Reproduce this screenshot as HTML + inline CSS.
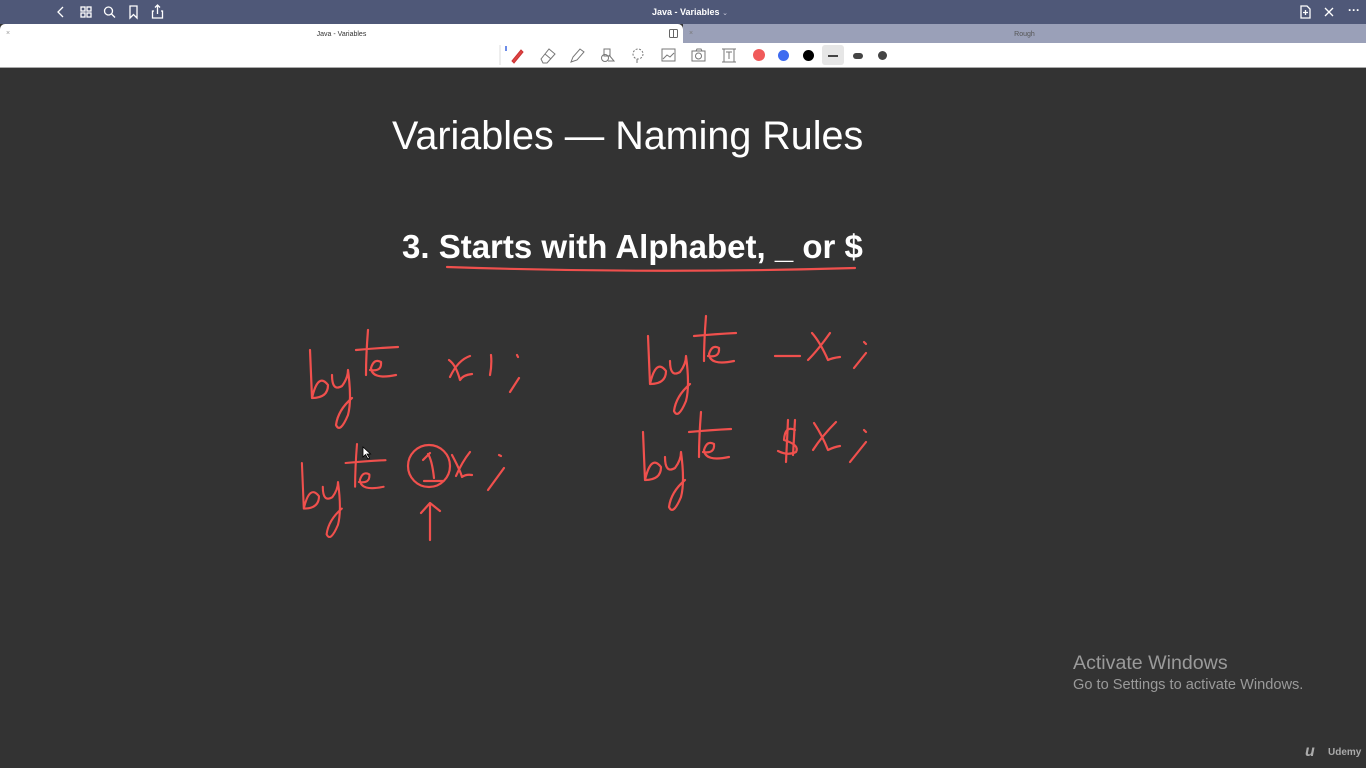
<!DOCTYPE html>
<html><head><meta charset="utf-8"><style>
*{margin:0;padding:0;box-sizing:border-box}
body{width:1366px;height:768px;overflow:hidden;background:#333333;font-family:"Liberation Sans",sans-serif;position:relative}
.top{position:absolute;left:0;top:0;width:1366px;height:24px;background:#4f5878;color:#fff}
.tabs{position:absolute;top:24px;left:0;width:1366px;height:19px}
.tab1{position:absolute;left:0;top:0;width:683px;height:19px;background:#fff;border-radius:5px 5px 0 0;font-size:7px;color:#333;text-align:center;line-height:19px}
.tab2{position:absolute;left:683px;top:0;width:683px;height:19px;background:#9aa0b8;font-size:7px;color:#555;text-align:center;line-height:19px}
.tool{position:absolute;top:43px;left:0;width:1366px;height:25px;background:#fff;border-bottom:1px solid #aaa}
.w{position:absolute;white-space:nowrap}
</style></head><body>
<div class="top">
<svg width="1366" height="24" style="position:absolute;left:0;top:0" fill="none" stroke="#fff" stroke-width="1.3">
<path d="M63 7 L58 12 L63 17"/>
<rect x="81" y="7" width="4" height="4"/><rect x="87" y="7" width="4" height="4"/><rect x="81" y="13" width="4" height="4"/><rect x="87" y="13" width="4" height="4"/>
<circle cx="108.5" cy="11" r="4"/><path d="M111.5 14 L115 17.5"/>
<path d="M130 6 H137 V18 L133.5 14.5 L130 18 Z"/>
<path d="M154 11 H152.5 V18 H162.5 V11 H161 M157.5 14 V5 M155 7.5 L157.5 5 L160 7.5"/>
<path d="M1301 6 H1307 L1310 9 V18 H1301 Z M1305.5 10 V15 M1303 12.5 H1308"/>
<path d="M1325 8 L1333 16 M1333 8 L1325 16"/>
</svg>
<div class="w" style="left:652px;top:7px;font-size:9px;font-weight:bold">Java - Variables <span style="font-weight:normal;font-size:7px;color:#ccd">⌄</span></div>
<div class="w" style="left:1348px;top:3px;font-size:12px;font-weight:bold">···</div>
</div>
<div class="tabs">
<div class="tab1"><span style="position:absolute;left:6px;color:#999">×</span><span style="position:relative;top:1px">Java - Variables</span><svg style="position:absolute;left:669px;top:5px" width="10" height="9" fill="none" stroke="#666"><rect x="0.5" y="0.5" width="8" height="8" rx="1"/><path d="M4.5 0.5 V8.5"/></svg></div>
<div class="tab2"><span style="position:absolute;left:6px;color:#777">×</span><span style="position:relative;top:1px">Rough</span></div>
</div>
<div class="tool">
<svg width="1366" height="25" style="position:absolute;left:0;top:0" fill="none" stroke="#777" stroke-width="1">
<path d="M500 2 V22" stroke="#ddd"/>
<path d="M506 3 V8" stroke="#3a66e0" stroke-width="1.5"/>
<path d="M512 18 L521 7 L523 9 L514 20 Z" stroke="#c33" fill="#d44"/>
<path d="M541 16 L549 6 L555 11 L547 20 H543 Z M545 11 L551 16"/>
<path d="M571 19 L573 14 L580 6 L584 9 L577 17 Z"/>
<rect x="604" y="6" width="6" height="7"/><circle cx="605" cy="15" r="3.5"/><path d="M609 12 L614 18 H608"/>
<circle cx="638" cy="11" r="5" stroke-dasharray="2 1.5"/><path d="M637 16 V20"/>
<rect x="662" y="6" width="13" height="12"/><path d="M663 16 L667 12 L670 14 L674 10"/>
<rect x="692" y="8" width="13" height="10"/><circle cx="698.5" cy="13" r="3"/><path d="M696 8 L697 6 H701 L702 8"/>
<path d="M722 6 H736 M722 19 H736 M729 9 V16 M726 9 H732 M724 6 V19 M734 6 V19"/>
</svg>
<div class="w" style="left:753px;top:6px;width:12px;height:12px;border-radius:50%;background:#f05a5a"></div>
<div class="w" style="left:778px;top:7px;width:11px;height:11px;border-radius:50%;background:#3e6bf0"></div>
<div class="w" style="left:803px;top:7px;width:11px;height:11px;border-radius:50%;background:#000"></div>
<div class="w" style="left:822px;top:2px;width:22px;height:20px;border-radius:3px;background:#e6e6e6"></div>
<div class="w" style="left:828px;top:12px;width:10px;height:2px;background:#444"></div>
<div class="w" style="left:853px;top:10px;width:10px;height:6px;border-radius:3px;background:#444"></div>
<div class="w" style="left:878px;top:8px;width:9px;height:9px;border-radius:50%;background:#444"></div>
</div>

<div class="w" style="left:392px;top:114px;font-size:39.5px;color:#fff">Variables — Naming Rules</div>
<div class="w" style="left:402px;top:228px;font-size:33px;color:#fff;font-weight:bold">3. Starts with Alphabet, _ or $</div>

<svg width="1366" height="768" style="position:absolute;left:0;top:0" fill="none" stroke="#f0504d" stroke-width="2.2" stroke-linecap="round" stroke-linejoin="round">
<path d="M447 267 Q650 274 855 268"/>
<defs><g id="byte">
<path d="M2 20 Q3 45 4 68 Q10 42 20 55 Q20 68 4 68"/>
<path d="M24 45 Q24 62 34 56 Q40 48 40 40 Q44 70 40 85 Q32 104 28 95 Q30 80 44 68"/>
<path d="M60 0 Q58 25 58 45 M48 20 Q70 18 90 17"/>
<path d="M62 40 Q74 42 73 32 Q66 28 63 38 Q64 50 88 45"/>
</g></defs>
<use href="#byte" transform="translate(308,330)"/>
<use href="#byte" transform="translate(646,316)"/>
<use href="#byte" transform="translate(300,444) scale(0.95)"/>
<use href="#byte" transform="translate(641,412)"/>
<path d="M450 377 Q458 360 470 356 M449 360 Q456 365 460 380 Q463 375 472 374 M491 355 Q492 365 490 375 M517 355 L518 357 M519 378 L510 392"/>
<path d="M775 356 H800 M812 333 Q820 342 828 360 Q832 358 840 357 M808 360 Q818 350 830 333 M864 342 L866 344 M866 353 L854 368"/>
<path d="M795 430 Q785 425 784 440 Q800 445 796 452 Q788 456 778 451 M788 420 L786 462 M795 420 L793 455 M814 423 Q822 435 828 450 Q834 447 840 446 M813 450 Q822 436 836 422 M864 430 L866 432 M866 442 L850 462"/>
<circle cx="429" cy="466" r="21"/><path d="M428 454 Q432 460 434 478 M423 460 L430 453 M424 481 H443"/>
<path d="M452 455 Q460 470 462 477 Q466 474 472 475 M456 476 Q462 462 470 452 M499 455 L501 456 M504 468 L488 490"/>
<path d="M430 540 V505 M421 513 L430 503 L440 511"/>
</svg>
<svg style="position:absolute;left:362px;top:446px" width="10" height="14"><path d="M1 1 V11 L3.5 8.5 L6 13 L7.5 12 L5 8 H8.5 Z" fill="#fff" stroke="#000" stroke-width="0.8"/></svg>

<div class="w" style="left:1073px;top:652px;font-size:19.6px;color:#9a9a9a">Activate Windows</div>
<div class="w" style="left:1073px;top:677px;font-size:14.6px;color:#9a9a9a">Go to Settings to activate Windows.</div>
<div class="w" style="left:1305px;top:743px;font-size:16px;color:#aaa;font-weight:bold;font-style:italic">u</div>
<div class="w" style="left:1328px;top:747px;font-size:10px;color:#aaa;font-weight:bold">Udemy</div>
</body></html>
